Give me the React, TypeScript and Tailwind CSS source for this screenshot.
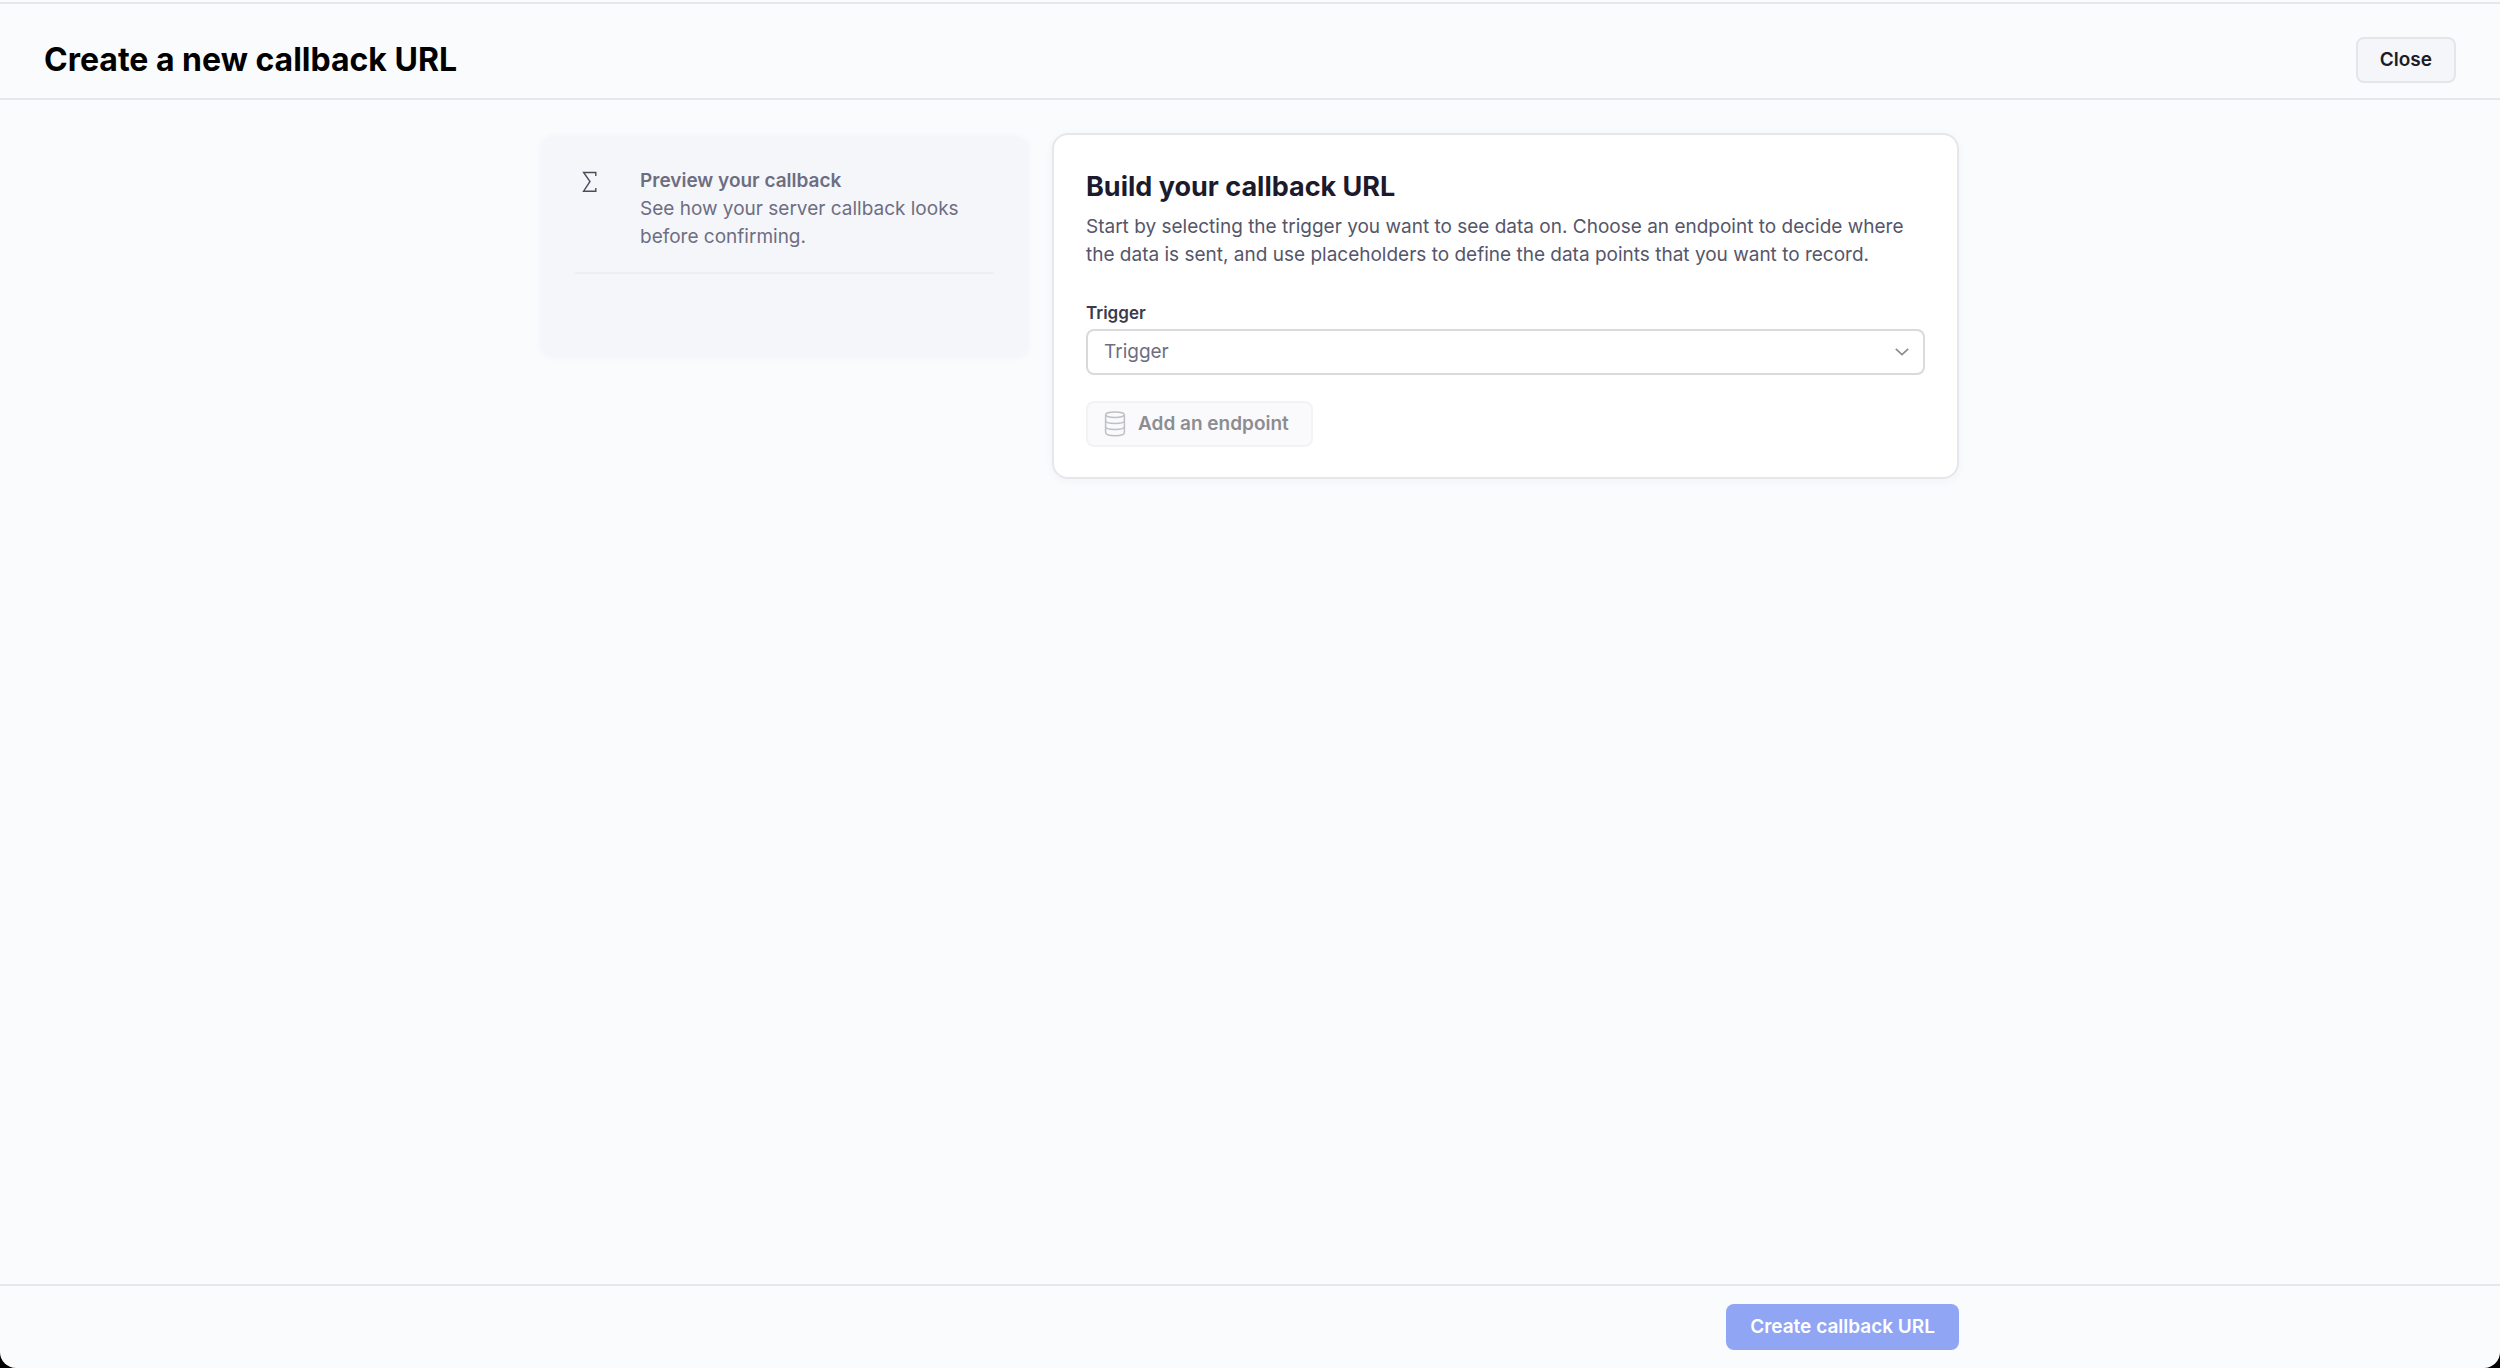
import { useState } from "react";

const TRIGGERS = ["Install", "Session", "Event", "Purchase"];

function SigmaIcon() {
  return (
    <svg viewBox="0 0 16 22" className="h-[22px] w-4" fill="none" stroke="#4b4d5a" strokeWidth="1.4" aria-hidden="true">
      <path d="M13.8 5V1.5H1.6L8 10.5 1.6 20.2h12.2V17" />
    </svg>
  );
}

function DatabaseIcon() {
  return (
    <svg viewBox="0 0 22 26" className="h-[26px] w-[22px] shrink-0" fill="none" stroke="#bfc0c4" strokeWidth="1.5" aria-hidden="true">
      <ellipse cx="11" cy="3.8" rx="9.4" ry="2.7" />
      <path d="M1.6 3.8v17.8c0 2 3.6 3.2 9.4 3.2s9.4-1.2 9.4-3.2V3.8" />
      <path d="M1.6 9.8c0 1.7 4 2.7 9.4 2.7s9.4-1 9.4-2.7" />
      <path d="M1.6 15.8c0 1.7 4 2.7 9.4 2.7s9.4-1 9.4-2.7" />
    </svg>
  );
}

function ChevronIcon() {
  return (
    <svg
      viewBox="0 0 14 8"
      className="pointer-events-none absolute top-1/2 right-4 h-2 w-3.5 -translate-y-1/2"
      fill="none"
      stroke="#8b8c93"
      strokeWidth="1.7"
      aria-hidden="true"
    >
      <path d="M.8.8 7 6.6 13.2.8" />
    </svg>
  );
}

function Header() {
  return (
    <header className="flex h-[98px] items-center justify-between border-y-2 border-[#e6e7ea] px-11 pt-[18px]">
      <h1 className="text-[32px] leading-10 font-bold text-black">Create a new callback URL</h1>
      <button
        type="button"
        className="h-[46px] rounded-lg border-2 border-[#e5e6ea] bg-[#f5f6fa] px-[22px] text-[19px] font-semibold text-[#1b1c26]"
      >
        Close
      </button>
    </header>
  );
}

function PreviewCard() {
  return (
    <aside className="mt-1 min-h-[220px] w-full rounded-xl bg-[#f5f6fa] px-[34px] pt-[30px] shadow-[0_0_4px_2px_#f5f6fa] lg:w-[487px] lg:shrink-0">
      <div className="flex gap-[42px] border-b-2 border-[#eeeff3] pb-[21px] pl-[7px]">
        <div className="pt-1">
          <SigmaIcon />
        </div>
        <div className="text-[19px] leading-7 text-[#6d6e82]">
          <h2 className="font-semibold">Preview your callback</h2>
          <p>See how your server callback looks before confirming.</p>
        </div>
      </div>
    </aside>
  );
}

function BuilderCard() {
  const [trigger, setTrigger] = useState("");

  return (
    <section className="min-w-0 flex-1 rounded-2xl border-2 border-[#e6e7eb] bg-white px-8 pt-8 pb-[30px] shadow-[0_2px_10px_rgba(30,40,80,0.04)]">
      <h2 className="text-[27px] leading-10 font-bold text-[#1b1b2d]">Build your callback URL</h2>
      <p className="mt-1.5 text-[19px] leading-7 text-[#55566a]">
        Start by selecting the trigger you want to see data on. Choose an endpoint to decide where the data is sent, and use
        placeholders to define the data points that you want to record.
      </p>

      <label htmlFor="trigger" className="mt-[30px] mb-0.5 block text-[17px] leading-7 font-semibold text-[#3a3b4e]">
        Trigger
      </label>
      <div className="relative">
        <select
          id="trigger"
          value={trigger}
          onChange={(event) => setTrigger(event.target.value)}
          className="block h-[46px] w-full appearance-none rounded-lg border-2 border-[#d9dade] bg-white pr-12 pl-4 text-[19px] text-[#6d6e82]"
        >
          <option value="">Trigger</option>
          {TRIGGERS.map((name) => (
            <option key={name} value={name}>
              {name}
            </option>
          ))}
        </select>
        <ChevronIcon />
      </div>

      <button
        type="button"
        disabled={!trigger}
        className="mt-[26px] flex h-[46px] items-center gap-3 rounded-lg border-2 border-[#f3f3f6] bg-[#fafafc] pr-[22px] pl-4 text-[19px] font-semibold text-[#8c8d91]"
      >
        <DatabaseIcon />
        Add an endpoint
      </button>
    </section>
  );
}

export default function App() {
  return (
    <div className="min-h-screen bg-black font-[Inter,'Liberation_Sans',sans-serif]">
      <div className="flex min-h-screen flex-col rounded-b-2xl bg-[#fafbfd] pt-0.5">
        <Header />
        <main className="mx-auto flex w-full max-w-[1418px] flex-1 flex-col items-start gap-6 pt-[33px] pb-8 lg:flex-row">
          <PreviewCard />
          <BuilderCard />
        </main>
        <footer className="border-t-2 border-[#e6e7ea] py-[18px]">
          <div className="mx-auto flex w-full max-w-[1418px] justify-end">
            <button type="button" disabled className="h-[46px] rounded-lg bg-[#90a6f4] px-6 text-[19px] font-semibold text-white">
              Create callback URL
            </button>
          </div>
        </footer>
      </div>
    </div>
  );
}
